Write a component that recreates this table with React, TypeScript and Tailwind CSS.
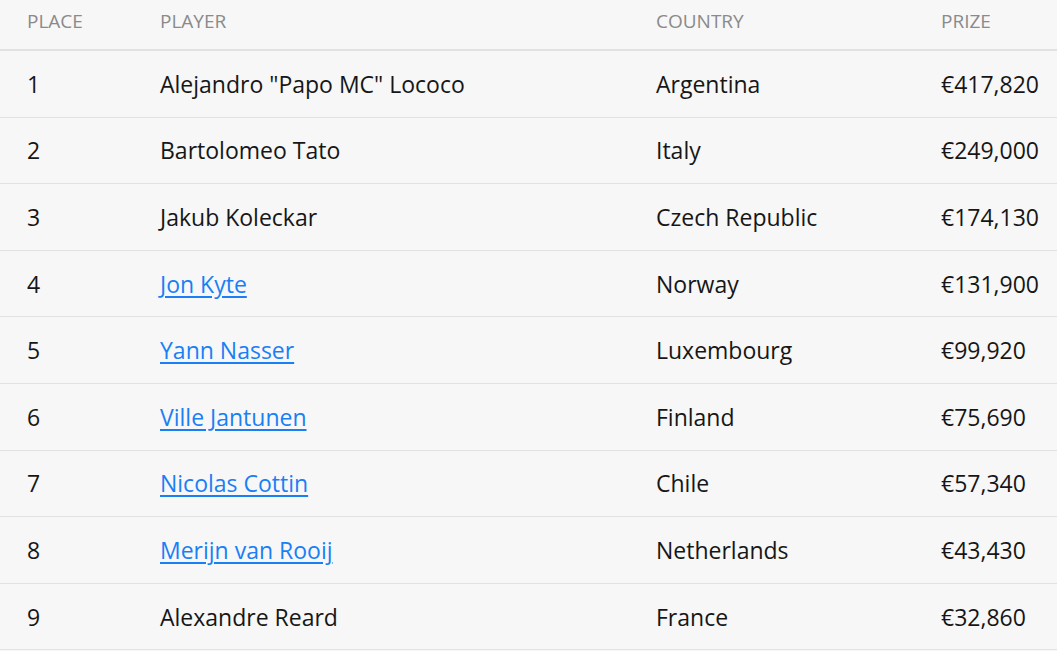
const rows = [
  { place: 1, name: 'Alejandro "Papo MC" Lococo', link: false, country: "Argentina", prize: "€417,820" },
  { place: 2, name: "Bartolomeo Tato", link: false, country: "Italy", prize: "€249,000" },
  { place: 3, name: "Jakub Koleckar", link: false, country: "Czech Republic", prize: "€174,130" },
  { place: 4, name: "Jon Kyte", link: true, country: "Norway", prize: "€131,900" },
  { place: 5, name: "Yann Nasser", link: true, country: "Luxembourg", prize: "€99,920" },
  { place: 6, name: "Ville Jantunen", link: true, country: "Finland", prize: "€75,690" },
  { place: 7, name: "Nicolas Cottin", link: true, country: "Chile", prize: "€57,340" },
  { place: 8, name: "Merijn van Rooij", link: true, country: "Netherlands", prize: "€43,430" },
  { place: 9, name: "Alexandre Reard", link: false, country: "France", prize: "€32,860" },
];

export default function App() {
  return (
    <div className="min-h-screen w-full bg-[#f7f7f7] font-['Open_Sans',sans-serif]">
      <table className="w-full table-fixed border-collapse">
        <colgroup>
          <col className="w-[133px]" />
          <col className="w-[496px]" />
          <col className="w-[285px]" />
          <col />
        </colgroup>
        <thead>
          <tr className="border-b-2 border-[#e2e2e2] text-left align-top text-[19px] leading-[26px] uppercase text-[#8a8a8a]">
            <th className="pt-[8px] pb-[15px] pl-[27px] font-normal">Place</th>
            <th className="pt-[8px] pb-[15px] pl-[27px] font-normal">Player</th>
            <th className="pt-[8px] pb-[15px] pl-[27px] font-normal">Country</th>
            <th className="pt-[8px] pb-[15px] pl-[27px] font-normal">Prize</th>
          </tr>
        </thead>
        <tbody>
          {rows.map((r) => (
            <tr key={r.place} className="border-b border-[#e2e2e2] text-[23px] leading-[32px] text-[#161616]">
              <td className="py-[16.8px] pl-[27px]">{r.place}</td>
              <td className="pl-[27px]">
                {r.link ? (
                  <a href="#" className="text-[#1a7ff5] underline decoration-[1.5px] underline-offset-[3px]">
                    {r.name}
                  </a>
                ) : (
                  r.name
                )}
              </td>
              <td className="pl-[27px]">{r.country}</td>
              <td className="pl-[27px]">{r.prize}</td>
            </tr>
          ))}
        </tbody>
      </table>
    </div>
  );
}
